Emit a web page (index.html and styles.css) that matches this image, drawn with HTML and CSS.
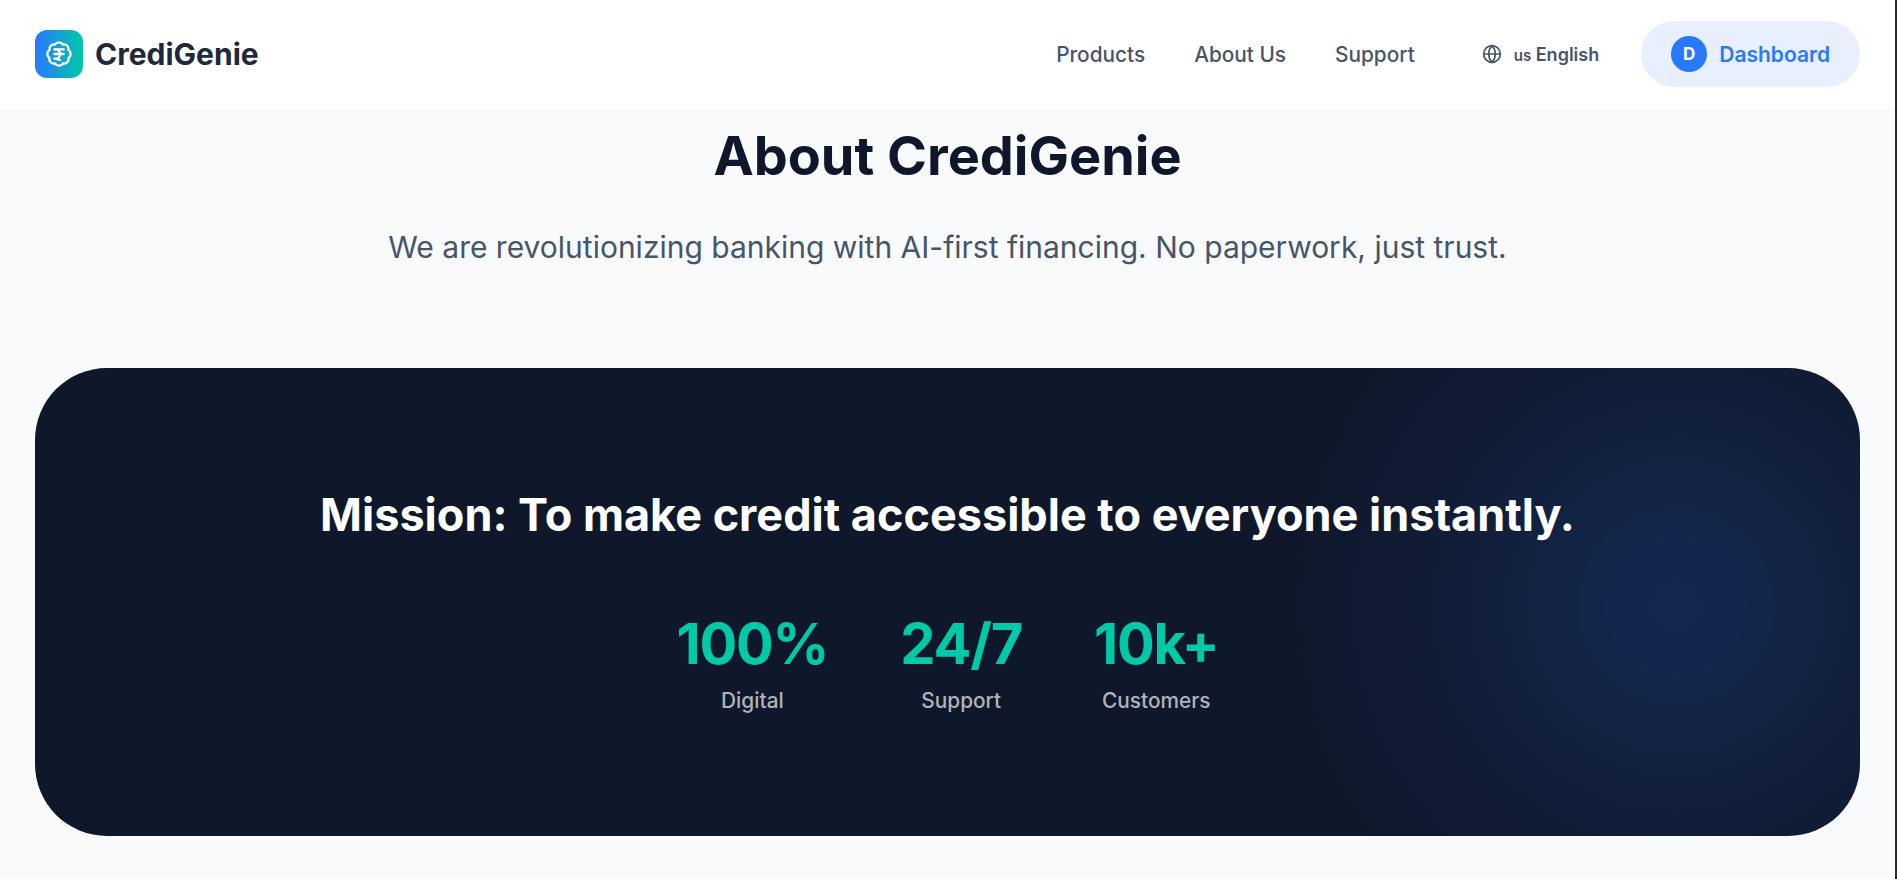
FILE: index.html
```html
<!doctype html>
<html>
<head>
	<meta charset="utf-8">
	<title>CrediGenie</title>
	<link rel="stylesheet" href="styles.css">
</head>
<body>
	<header class="topbar">
		<a class="brand" href="#">
			<span class="brand-mark">
				<svg viewBox="0 0 24 24" width="28" height="28" fill="none" stroke="#fff" stroke-width="2" stroke-linecap="round" stroke-linejoin="round">
					<path d="M3.85 8.62a4 4 0 0 1 4.78-4.77 4 4 0 0 1 6.74 0 4 4 0 0 1 4.78 4.78 4 4 0 0 1 0 6.74 4 4 0 0 1-4.77 4.78 4 4 0 0 1-6.75 0 4 4 0 0 1-4.78-4.77 4 4 0 0 1 0-6.76Z"/>
					<path d="M8 8h8"/>
					<path d="M8 12h8"/>
					<path d="m13 17-5-1h1a4 4 0 0 0 0-8"/>
				</svg>
			</span>
			<span class="brand-name">CrediGenie</span>
		</a>
		<nav class="nav">
			<a href="#">Products</a>
			<a href="#">About Us</a>
			<a href="#">Support</a>
		</nav>
		<button class="lang">
			<svg viewBox="0 0 24 24" width="20" height="20" fill="none" stroke="currentColor" stroke-width="2" stroke-linecap="round" stroke-linejoin="round">
				<circle cx="12" cy="12" r="10"/>
				<path d="M12 2a14.5 14.5 0 0 0 0 20 14.5 14.5 0 0 0 0-20"/>
				<path d="M2 12h20"/>
			</svg>
			<span><span class="lang-code">us</span> English</span>
		</button>
		<a class="dash" href="#">
			<span class="dash-avatar">D</span>
			<span>Dashboard</span>
		</a>
	</header>

	<main class="page">
		<h1 class="title">About CrediGenie</h1>
		<p class="lead">We are revolutionizing banking with AI-first financing. No paperwork, just trust.</p>

		<section class="mission">
			<h2>Mission: To make credit accessible to everyone instantly.</h2>
			<div class="stats">
				<div class="stat">
					<div class="stat-num">100%</div>
					<div class="stat-label">Digital</div>
				</div>
				<div class="stat">
					<div class="stat-num">24/7</div>
					<div class="stat-label">Support</div>
				</div>
				<div class="stat">
					<div class="stat-num">10k+</div>
					<div class="stat-label">Customers</div>
				</div>
			</div>
		</section>
	</main>
</body>
</html>
```

FILE: styles.css
```css
* {
	box-sizing: border-box;
}
html, body {
	margin: 0;
	height: 100%;
}
body {
	font-family: Inter, "Noto Sans", sans-serif;
	background-color: #f9fafc;
	color: #0f172a;
	overflow: hidden;
	border-right: 2px solid #2b2b2b;
}
a {
	text-decoration: none;
	color: inherit;
}

.topbar {
	display: flex;
	align-items: center;
	height: 111px;
	padding: 0 35px 2px;
	background-color: #fff;
	border-bottom: 1px solid #f1f5f9;
}
.brand {
	display: flex;
	align-items: center;
	gap: 12px;
	margin-right: auto;
}
.brand-mark {
	display: flex;
	align-items: center;
	justify-content: center;
	width: 48px;
	height: 48px;
	border-radius: 12px;
	background-image: linear-gradient(to right, #2979ff, #00c9a7);
}
.brand-name {
	font-size: 30px;
	font-weight: 700;
	color: #1e293b;
}
.nav {
	display: flex;
	gap: 49px;
	font-size: 20.8px;
	font-weight: 500;
	color: #475569;
}
.lang {
	display: flex;
	align-items: center;
	gap: 12px;
	margin-left: 67px;
	padding: 0;
	border: 0;
	background: none;
	font-family: inherit;
	font-size: 18px;
	font-weight: 600;
	color: #475569;
}
.lang-code {
	font-size: 15px;
}
.dash {
	display: flex;
	align-items: center;
	gap: 12px;
	height: 66px;
	margin-left: 42px;
	padding: 0 30px;
	border-radius: 33px;
	background-color: #e8f0fe;
	color: #2979ff;
	font-size: 21px;
	font-weight: 600;
}
.dash-avatar {
	display: flex;
	align-items: center;
	justify-content: center;
	width: 36px;
	height: 36px;
	border-radius: 50%;
	background-color: #2979ff;
	color: #fff;
	font-size: 17px;
	font-weight: 700;
}

.page {
	padding: 0 35px;
	text-align: center;
}
.title {
	margin: 0;
	padding-top: 10px;
	font-size: 54px;
	line-height: 70px;
	font-weight: 700;
}
.lead {
	margin: 36px 0 0;
	font-size: 30px;
	line-height: 40px;
	color: #475569;
}
.mission {
	margin-top: 101px;
	height: 468px;
	padding-top: 119px;
	border-radius: 72px;
	color: #fff;
	background-color: #0f172a;
	background-image: radial-gradient(circle 400px at 1641px 238px, rgba(41,121,255,.18) 0%, rgba(41,121,255,.15) 20%, rgba(41,121,255,.09) 45%, rgba(41,121,255,.04) 70%, rgba(41,121,255,0) 100%);
}
.mission h2 {
	margin: 0;
	font-size: 45px;
	line-height: 56px;
	font-weight: 700;
}
.stats {
	display: flex;
	justify-content: center;
	gap: 72px;
	margin-top: 68px;
}
.stat-num {
	font-size: 56px;
	line-height: 66px;
	font-weight: 700;
	letter-spacing: -1.2px;
	color: #00c9a7;
}
.stat-label {
	margin-top: 10px;
	font-size: 20.8px;
	line-height: 28px;
	font-weight: 500;
	color: #b0b4bd;
}
```
